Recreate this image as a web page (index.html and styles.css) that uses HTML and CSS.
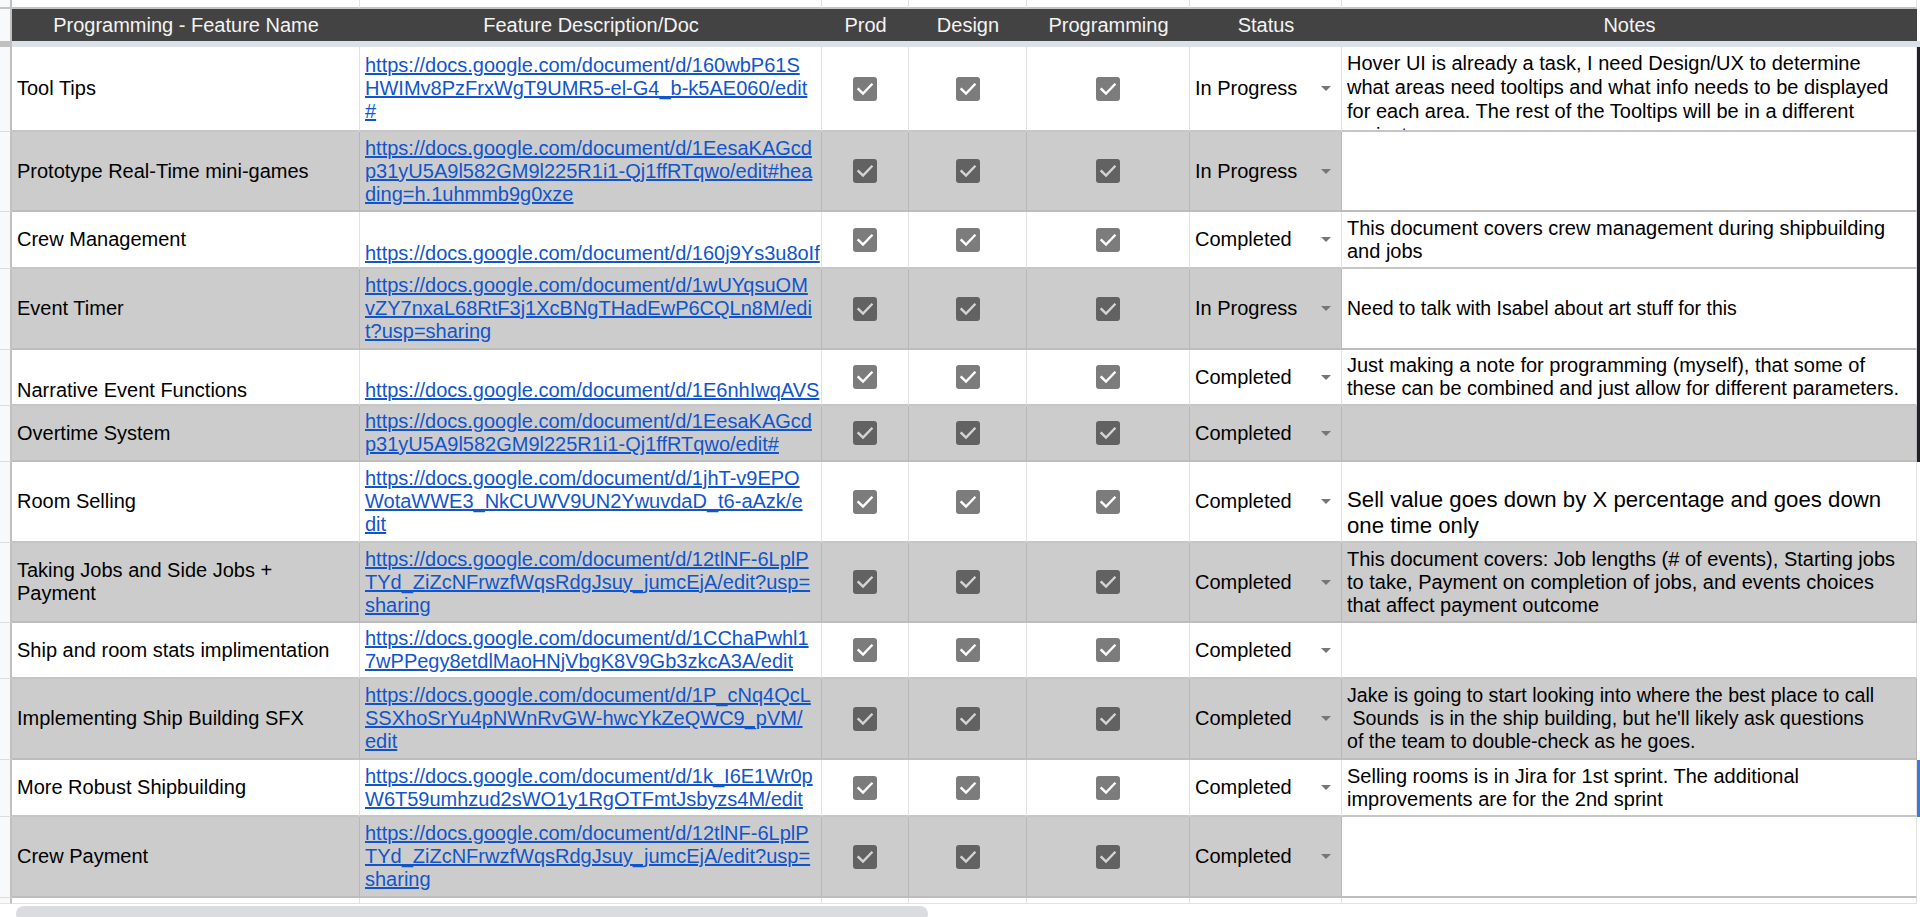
FILE: index.html
```html
<!DOCTYPE html>
<html>
<head>
<meta charset="utf-8">
<title>Programming Features</title>
<link rel="stylesheet" href="styles.css">
</head>
<body>
<div class="sheet">
  <div class="row toprow">
    <div class="c rh"></div><div class="c"></div><div class="c"></div><div class="c"></div><div class="c"></div><div class="c"></div><div class="c"></div><div class="c"></div><div class="c edge"></div>
  </div>
  <div class="row head">
    <div class="c rh"></div>
    <div class="c">Programming - Feature Name</div>
    <div class="c">Feature Description/Doc</div>
    <div class="c">Prod</div>
    <div class="c">Design</div>
    <div class="c">Programming</div>
    <div class="c">Status</div>
    <div class="c">Notes</div>
    <div class="c edge"></div>
  </div>
  <div class="freeze"></div>

  <!-- row 1 -->
  <div class="row white h85">
    <div class="c rh"></div>
    <div class="c txt">Tool Tips</div>
    <div class="c txt"><a href="#" class="lnk">https://docs.google.com/document/d/160wbP61S<br>HWIMv8PzFrxWgT9UMR5-el-G4_b-k5AE060/edit<br>#</a></div>
    <div class="c box"><span class="cb"><svg viewBox="0 0 24 24" width="24" height="24"><rect width="24" height="24" rx="3" class="cb-bg"/><path d="M5.5 12.2 L10 16.6 L18.6 7.6" class="cb-ck"/></svg></span></div>
    <div class="c box"><span class="cb"><svg viewBox="0 0 24 24" width="24" height="24"><rect width="24" height="24" rx="3" class="cb-bg"/><path d="M5.5 12.2 L10 16.6 L18.6 7.6" class="cb-ck"/></svg></span></div>
    <div class="c box"><span class="cb"><svg viewBox="0 0 24 24" width="24" height="24"><rect width="24" height="24" rx="3" class="cb-bg"/><path d="M5.5 12.2 L10 16.6 L18.6 7.6" class="cb-ck"/></svg></span></div>
    <div class="c status"><span>In Progress</span><span class="arrow"></span></div>
    <div class="c txt top note-a">Hover UI is already a task, I need Design/UX to determine<br>what areas need tooltips and what info needs to be displayed<br>for each area. The rest of the Tooltips will be in a different<br>project</div>
    <div class="c edge dark"></div>
  </div>

  <!-- row 2 -->
  <div class="row grey h80">
    <div class="c rh"></div>
    <div class="c txt">Prototype Real-Time mini-games</div>
    <div class="c txt"><a href="#" class="lnk">https://docs.google.com/document/d/1EesaKAGcd<br>p31yU5A9l582GM9l225R1i1-Qj1ffRTqwo/edit#hea<br>ding=h.1uhmmb9g0xze</a></div>
    <div class="c box"><span class="cb"><svg viewBox="0 0 24 24" width="24" height="24"><rect width="24" height="24" rx="3" class="cb-bg"/><path d="M5.5 12.2 L10 16.6 L18.6 7.6" class="cb-ck"/></svg></span></div>
    <div class="c box"><span class="cb"><svg viewBox="0 0 24 24" width="24" height="24"><rect width="24" height="24" rx="3" class="cb-bg"/><path d="M5.5 12.2 L10 16.6 L18.6 7.6" class="cb-ck"/></svg></span></div>
    <div class="c box"><span class="cb"><svg viewBox="0 0 24 24" width="24" height="24"><rect width="24" height="24" rx="3" class="cb-bg"/><path d="M5.5 12.2 L10 16.6 L18.6 7.6" class="cb-ck"/></svg></span></div>
    <div class="c status"><span>In Progress</span><span class="arrow"></span></div>
    <div class="c txt plain"></div>
    <div class="c edge dark"></div>
  </div>

  <!-- row 3 -->
  <div class="row white h57">
    <div class="c rh"></div>
    <div class="c txt">Crew Management</div>
    <div class="c txt bot"><a href="#" class="lnk">https://docs.google.com/document/d/160j9Ys3u8oIf</a></div>
    <div class="c box"><span class="cb"><svg viewBox="0 0 24 24" width="24" height="24"><rect width="24" height="24" rx="3" class="cb-bg"/><path d="M5.5 12.2 L10 16.6 L18.6 7.6" class="cb-ck"/></svg></span></div>
    <div class="c box"><span class="cb"><svg viewBox="0 0 24 24" width="24" height="24"><rect width="24" height="24" rx="3" class="cb-bg"/><path d="M5.5 12.2 L10 16.6 L18.6 7.6" class="cb-ck"/></svg></span></div>
    <div class="c box"><span class="cb"><svg viewBox="0 0 24 24" width="24" height="24"><rect width="24" height="24" rx="3" class="cb-bg"/><path d="M5.5 12.2 L10 16.6 L18.6 7.6" class="cb-ck"/></svg></span></div>
    <div class="c status"><span>Completed</span><span class="arrow"></span></div>
    <div class="c txt">This document covers crew management during shipbuilding<br>and jobs</div>
    <div class="c edge dark"></div>
  </div>

  <!-- row 4 -->
  <div class="row grey h81">
    <div class="c rh"></div>
    <div class="c txt">Event Timer</div>
    <div class="c txt"><a href="#" class="lnk">https://docs.google.com/document/d/1wUYqsuOM<br>vZY7nxaL68RtF3j1XcBNgTHadEwP6CQLn8M/edi<br>t?usp=sharing</a></div>
    <div class="c box"><span class="cb"><svg viewBox="0 0 24 24" width="24" height="24"><rect width="24" height="24" rx="3" class="cb-bg"/><path d="M5.5 12.2 L10 16.6 L18.6 7.6" class="cb-ck"/></svg></span></div>
    <div class="c box"><span class="cb"><svg viewBox="0 0 24 24" width="24" height="24"><rect width="24" height="24" rx="3" class="cb-bg"/><path d="M5.5 12.2 L10 16.6 L18.6 7.6" class="cb-ck"/></svg></span></div>
    <div class="c box"><span class="cb"><svg viewBox="0 0 24 24" width="24" height="24"><rect width="24" height="24" rx="3" class="cb-bg"/><path d="M5.5 12.2 L10 16.6 L18.6 7.6" class="cb-ck"/></svg></span></div>
    <div class="c status"><span>In Progress</span><span class="arrow"></span></div>
    <div class="c txt plain note-b">Need to talk with Isabel about art stuff for this</div>
    <div class="c edge dark"></div>
  </div>

  <!-- row 5 -->
  <div class="row white h56">
    <div class="c rh"></div>
    <div class="c txt bot">Narrative Event Functions</div>
    <div class="c txt bot"><a href="#" class="lnk">https://docs.google.com/document/d/1E6nhIwqAVS</a></div>
    <div class="c box"><span class="cb"><svg viewBox="0 0 24 24" width="24" height="24"><rect width="24" height="24" rx="3" class="cb-bg"/><path d="M5.5 12.2 L10 16.6 L18.6 7.6" class="cb-ck"/></svg></span></div>
    <div class="c box"><span class="cb"><svg viewBox="0 0 24 24" width="24" height="24"><rect width="24" height="24" rx="3" class="cb-bg"/><path d="M5.5 12.2 L10 16.6 L18.6 7.6" class="cb-ck"/></svg></span></div>
    <div class="c box"><span class="cb"><svg viewBox="0 0 24 24" width="24" height="24"><rect width="24" height="24" rx="3" class="cb-bg"/><path d="M5.5 12.2 L10 16.6 L18.6 7.6" class="cb-ck"/></svg></span></div>
    <div class="c status"><span>Completed</span><span class="arrow"></span></div>
    <div class="c txt">Just making a note for programming (myself), that some of<br>these can be combined and just allow for different parameters.</div>
    <div class="c edge dark"></div>
  </div>

  <!-- row 6 -->
  <div class="row grey h56">
    <div class="c rh"></div>
    <div class="c txt">Overtime System</div>
    <div class="c txt"><a href="#" class="lnk">https://docs.google.com/document/d/1EesaKAGcd<br>p31yU5A9l582GM9l225R1i1-Qj1ffRTqwo/edit#</a></div>
    <div class="c box"><span class="cb"><svg viewBox="0 0 24 24" width="24" height="24"><rect width="24" height="24" rx="3" class="cb-bg"/><path d="M5.5 12.2 L10 16.6 L18.6 7.6" class="cb-ck"/></svg></span></div>
    <div class="c box"><span class="cb"><svg viewBox="0 0 24 24" width="24" height="24"><rect width="24" height="24" rx="3" class="cb-bg"/><path d="M5.5 12.2 L10 16.6 L18.6 7.6" class="cb-ck"/></svg></span></div>
    <div class="c box"><span class="cb"><svg viewBox="0 0 24 24" width="24" height="24"><rect width="24" height="24" rx="3" class="cb-bg"/><path d="M5.5 12.2 L10 16.6 L18.6 7.6" class="cb-ck"/></svg></span></div>
    <div class="c status"><span>Completed</span><span class="arrow"></span></div>
    <div class="c txt"></div>
    <div class="c edge dark"></div>
  </div>

  <!-- row 7 -->
  <div class="row white h81">
    <div class="c rh"></div>
    <div class="c txt">Room Selling</div>
    <div class="c txt"><a href="#" class="lnk">https://docs.google.com/document/d/1jhT-v9EPO<br>WotaWWE3_NkCUWV9UN2YwuvdaD_t6-aAzk/e<br>dit</a></div>
    <div class="c box"><span class="cb"><svg viewBox="0 0 24 24" width="24" height="24"><rect width="24" height="24" rx="3" class="cb-bg"/><path d="M5.5 12.2 L10 16.6 L18.6 7.6" class="cb-ck"/></svg></span></div>
    <div class="c box"><span class="cb"><svg viewBox="0 0 24 24" width="24" height="24"><rect width="24" height="24" rx="3" class="cb-bg"/><path d="M5.5 12.2 L10 16.6 L18.6 7.6" class="cb-ck"/></svg></span></div>
    <div class="c box"><span class="cb"><svg viewBox="0 0 24 24" width="24" height="24"><rect width="24" height="24" rx="3" class="cb-bg"/><path d="M5.5 12.2 L10 16.6 L18.6 7.6" class="cb-ck"/></svg></span></div>
    <div class="c status"><span>Completed</span><span class="arrow"></span></div>
    <div class="c txt bot big">Sell value goes down by X percentage and goes down<br>one time only</div>
    <div class="c edge"></div>
  </div>

  <!-- row 8 -->
  <div class="row grey h80">
    <div class="c rh"></div>
    <div class="c txt">Taking Jobs and Side Jobs +<br>Payment</div>
    <div class="c txt"><a href="#" class="lnk">https://docs.google.com/document/d/12tlNF-6LplP<br>TYd_ZiZcNFrwzfWqsRdgJsuy_jumcEjA/edit?usp=<br>sharing</a></div>
    <div class="c box"><span class="cb"><svg viewBox="0 0 24 24" width="24" height="24"><rect width="24" height="24" rx="3" class="cb-bg"/><path d="M5.5 12.2 L10 16.6 L18.6 7.6" class="cb-ck"/></svg></span></div>
    <div class="c box"><span class="cb"><svg viewBox="0 0 24 24" width="24" height="24"><rect width="24" height="24" rx="3" class="cb-bg"/><path d="M5.5 12.2 L10 16.6 L18.6 7.6" class="cb-ck"/></svg></span></div>
    <div class="c box"><span class="cb"><svg viewBox="0 0 24 24" width="24" height="24"><rect width="24" height="24" rx="3" class="cb-bg"/><path d="M5.5 12.2 L10 16.6 L18.6 7.6" class="cb-ck"/></svg></span></div>
    <div class="c status"><span>Completed</span><span class="arrow"></span></div>
    <div class="c txt">This document covers: Job lengths (# of events), Starting jobs<br>to take, Payment on completion of jobs, and events choices<br>that affect payment outcome</div>
    <div class="c edge"></div>
  </div>

  <!-- row 9 -->
  <div class="row white h56">
    <div class="c rh"></div>
    <div class="c txt">Ship and room stats implimentation</div>
    <div class="c txt"><a href="#" class="lnk">https://docs.google.com/document/d/1CChaPwhl1<br>7wPPegy8etdlMaoHNjVbgK8V9Gb3zkcA3A/edit</a></div>
    <div class="c box"><span class="cb"><svg viewBox="0 0 24 24" width="24" height="24"><rect width="24" height="24" rx="3" class="cb-bg"/><path d="M5.5 12.2 L10 16.6 L18.6 7.6" class="cb-ck"/></svg></span></div>
    <div class="c box"><span class="cb"><svg viewBox="0 0 24 24" width="24" height="24"><rect width="24" height="24" rx="3" class="cb-bg"/><path d="M5.5 12.2 L10 16.6 L18.6 7.6" class="cb-ck"/></svg></span></div>
    <div class="c box"><span class="cb"><svg viewBox="0 0 24 24" width="24" height="24"><rect width="24" height="24" rx="3" class="cb-bg"/><path d="M5.5 12.2 L10 16.6 L18.6 7.6" class="cb-ck"/></svg></span></div>
    <div class="c status"><span>Completed</span><span class="arrow"></span></div>
    <div class="c txt"></div>
    <div class="c edge"></div>
  </div>

  <!-- row 10 -->
  <div class="row grey h81">
    <div class="c rh"></div>
    <div class="c txt">Implementing Ship Building SFX</div>
    <div class="c txt"><a href="#" class="lnk">https://docs.google.com/document/d/1P_cNq4QcL<br>SSXhoSrYu4pNWnRvGW-hwcYkZeQWC9_pVM/<br>edit</a></div>
    <div class="c box"><span class="cb"><svg viewBox="0 0 24 24" width="24" height="24"><rect width="24" height="24" rx="3" class="cb-bg"/><path d="M5.5 12.2 L10 16.6 L18.6 7.6" class="cb-ck"/></svg></span></div>
    <div class="c box"><span class="cb"><svg viewBox="0 0 24 24" width="24" height="24"><rect width="24" height="24" rx="3" class="cb-bg"/><path d="M5.5 12.2 L10 16.6 L18.6 7.6" class="cb-ck"/></svg></span></div>
    <div class="c box"><span class="cb"><svg viewBox="0 0 24 24" width="24" height="24"><rect width="24" height="24" rx="3" class="cb-bg"/><path d="M5.5 12.2 L10 16.6 L18.6 7.6" class="cb-ck"/></svg></span></div>
    <div class="c status"><span>Completed</span><span class="arrow"></span></div>
    <div class="c txt note-c">Jake is going to start looking into where the best place to call<br>&nbsp;Sounds&nbsp; is in the ship building, but he'll likely ask questions<br>of the team to double-check as he goes.</div>
    <div class="c edge"></div>
  </div>

  <!-- row 11 -->
  <div class="row white h57">
    <div class="c rh"></div>
    <div class="c txt">More Robust Shipbuilding</div>
    <div class="c txt"><a href="#" class="lnk">https://docs.google.com/document/d/1k_I6E1Wr0p<br>W6T59umhzud2sWO1y1RgOTFmtJsbyzs4M/edit</a></div>
    <div class="c box"><span class="cb"><svg viewBox="0 0 24 24" width="24" height="24"><rect width="24" height="24" rx="3" class="cb-bg"/><path d="M5.5 12.2 L10 16.6 L18.6 7.6" class="cb-ck"/></svg></span></div>
    <div class="c box"><span class="cb"><svg viewBox="0 0 24 24" width="24" height="24"><rect width="24" height="24" rx="3" class="cb-bg"/><path d="M5.5 12.2 L10 16.6 L18.6 7.6" class="cb-ck"/></svg></span></div>
    <div class="c box"><span class="cb"><svg viewBox="0 0 24 24" width="24" height="24"><rect width="24" height="24" rx="3" class="cb-bg"/><path d="M5.5 12.2 L10 16.6 L18.6 7.6" class="cb-ck"/></svg></span></div>
    <div class="c status"><span>Completed</span><span class="arrow"></span></div>
    <div class="c txt">Selling rooms is in Jira for 1st sprint. The additional<br>improvements are for the 2nd sprint</div>
    <div class="c edge blue"></div>
  </div>

  <!-- row 12 -->
  <div class="row grey h81">
    <div class="c rh"></div>
    <div class="c txt">Crew Payment</div>
    <div class="c txt"><a href="#" class="lnk">https://docs.google.com/document/d/12tlNF-6LplP<br>TYd_ZiZcNFrwzfWqsRdgJsuy_jumcEjA/edit?usp=<br>sharing</a></div>
    <div class="c box"><span class="cb"><svg viewBox="0 0 24 24" width="24" height="24"><rect width="24" height="24" rx="3" class="cb-bg"/><path d="M5.5 12.2 L10 16.6 L18.6 7.6" class="cb-ck"/></svg></span></div>
    <div class="c box"><span class="cb"><svg viewBox="0 0 24 24" width="24" height="24"><rect width="24" height="24" rx="3" class="cb-bg"/><path d="M5.5 12.2 L10 16.6 L18.6 7.6" class="cb-ck"/></svg></span></div>
    <div class="c box"><span class="cb"><svg viewBox="0 0 24 24" width="24" height="24"><rect width="24" height="24" rx="3" class="cb-bg"/><path d="M5.5 12.2 L10 16.6 L18.6 7.6" class="cb-ck"/></svg></span></div>
    <div class="c status"><span>Completed</span><span class="arrow"></span></div>
    <div class="c txt plain"></div>
    <div class="c edge"></div>
  </div>

  <div class="row white tail">
    <div class="c rh"></div><div class="c"></div><div class="c"></div><div class="c"></div><div class="c"></div><div class="c"></div><div class="c"></div><div class="c"></div><div class="c edge"></div>
  </div>
  <div class="hscroll"><div class="thumb"></div></div>
</div>
</body>
</html>
```

FILE: styles.css
```css
html, body {
  margin: 0;
  padding: 0;
  background: #ffffff;
}
body {
  font-family: "Liberation Sans", Arial, sans-serif;
  font-size: 20px;
  line-height: 23px;
  color: #000000;
  width: 1920px;
  height: 917px;
  overflow: hidden;
}
.sheet {
  display: flex;
  flex-direction: column;
  width: 1920px;
}
.row {
  display: grid;
  grid-template-columns: 12px 348px 462px 87px 118px 163px 152px 575px 3px;
}
.c {
  box-sizing: border-box;
  border-right: 1px solid #e2e2e2;
  border-bottom: 2px solid #c6c6c6;
  overflow: hidden;
  min-width: 0;
}
.c.rh {
  background: #f8f9fa;
  border-right: 2px solid #c0c0c0;
  border-bottom: 1px solid #dadce0;
}
.c.edge {
  border-right: none;
}
.toprow {
  height: 9px;
  background: #ffffff;
}
.toprow .c {
  border-bottom: 2px solid #c4c4c4;
}
.head {
  height: 32px;
}
.head .c {
  background: #434343;
  color: #f3f3f3;
  border-right: none;
  border-bottom: none;
  display: flex;
  align-items: center;
  justify-content: center;
  white-space: nowrap;
}
.head .c.rh {
  background: #f8f9fa;
  border-right: 2px solid #c0c0c0;
}
.freeze {
  height: 6px;
  background: linear-gradient(to right, #c0c0c0 0 12px, #dce0e8 12px);
}
.h85 { height: 85px; }
.h81 { height: 81px; }
.h80 { height: 80px; }
.h57 { height: 57px; }
.h56 { height: 56px; }
.tail { height: 6px; }
.tail .c { border-bottom: 1px solid #e2e2e2; }

.grey .c {
  background: #cccccc;
  border-right-color: #b8b8b8;
  border-bottom-color: #bdbdbd;
}
.grey .c.rh {
  background: #f8f9fa;
  border-right-color: #c0c0c0;
  border-bottom-color: #dadce0;
}
.grey .c.plain {
  background: #ffffff;
  border-right-color: #e2e2e2;
}
.white .c { background: #ffffff; }
.white .c.rh { background: #f8f9fa; }

.c.edge { background: #ffffff; border-bottom-color: #ffffff; }
.grey .c.edge { background: #ffffff; border-bottom-color: #ffffff; }
.c.edge.dark, .grey .c.edge.dark { background: #1f2227; border-bottom-color: #1f2227; }
.c.edge.blue { background: #3c78d8; border-bottom-color: #3c78d8; }

.txt {
  padding: 0 5px;
  display: flex;
  flex-direction: column;
  justify-content: center;
  white-space: nowrap;
}
.txt.top {
  justify-content: flex-start;
  padding-top: 4px;
}
.txt.bot {
  justify-content: flex-end;
  padding-bottom: 2px;
}
.txt.big {
  font-size: 22.2px;
  line-height: 26px;
  padding-bottom: 2px;
}
.note-a {
  line-height: 24px;
}
.note-b {
  font-size: 19.5px;
}
.note-c {
  font-size: 19.6px;
}
.lnk {
  color: #1155cc;
  text-decoration: underline;
}
.box {
  display: flex;
  align-items: center;
  justify-content: center;
}
.cb {
  display: block;
  width: 24px;
  height: 24px;
}
.cb svg { display: block; }
.cb-bg { fill: #7c7c7c; }
.cb-ck {
  fill: none;
  stroke: #ffffff;
  stroke-width: 2.4;
  stroke-linecap: square;
}
.grey .cb-bg { fill: #626262; }
.grey .cb-ck { stroke: #d4d4d4; }

.status {
  display: flex;
  align-items: center;
  justify-content: space-between;
  padding: 0 10px 0 5px;
  white-space: nowrap;
}
.arrow {
  width: 0;
  height: 0;
  border-left: 5px solid transparent;
  border-right: 5px solid transparent;
  border-top: 5px solid #767676;
}
.hscroll {
  height: 13px;
  padding: 2px 0 0 16px;
  background: #ffffff;
  box-sizing: border-box;
}
.thumb {
  width: 912px;
  height: 16px;
  background: #dadce0;
  border-radius: 8px;
}
```
